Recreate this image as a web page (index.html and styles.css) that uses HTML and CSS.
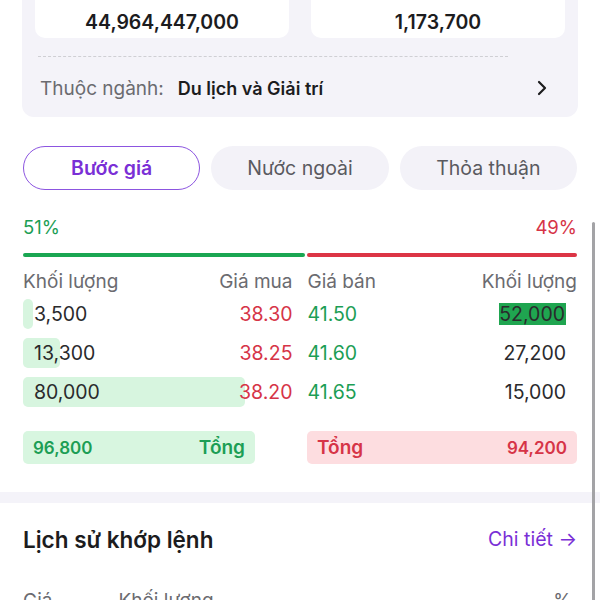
FILE: index.html
```html
<!DOCTYPE html>
<html lang="vi">
<head>
    <meta charset="UTF-8">
    <meta name="viewport" content="width=device-width, initial-scale=1.0">
    <title>Bước giá</title>
    <link rel="stylesheet" href="styles.css">
</head>
<body>
    <div class="page">
        <div class="info">
            <div class="cards">
                <div class="card">44,964,447,000</div>
                <div class="card">1,173,700</div>
            </div>
            <div class="dash"></div>
            <div class="sector">
                <span class="sector_label">Thuộc ngành:</span>
                <span class="sector_name">Du lịch và Giải trí</span>
                <svg class="chev" width="14" height="16" viewBox="0 0 14 16"><path d="M4 2 L10 8 L4 14" fill="none" stroke="#1c1c1e" stroke-width="2.2" stroke-linecap="round" stroke-linejoin="round"/></svg>
            </div>
        </div>

        <div class="tabs">
            <div class="tab active">Bước giá</div>
            <div class="tab">Nước ngoài</div>
            <div class="tab">Thỏa thuận</div>
        </div>

        <div class="book">
            <div class="pct">
                <span class="green">51%</span>
                <span class="red">49%</span>
            </div>
            <div class="ratio">
                <div class="ratio_buy" style="flex:51"></div>
                <div class="ratio_sell" style="flex:49"></div>
            </div>

            <div class="sides">
                <div class="side">
                    <div class="head"><span>Khối lượng</span><span>Giá mua</span></div>
                    <div class="row">
                        <div class="fill" style="width:10px"></div>
                        <span class="vol">3,500</span><span class="red">38.30</span>
                    </div>
                    <div class="row">
                        <div class="fill" style="width:37px"></div>
                        <span class="vol">13,300</span><span class="red">38.25</span>
                    </div>
                    <div class="row">
                        <div class="fill" style="width:222px"></div>
                        <span class="vol">80,000</span><span class="red">38.20</span>
                    </div>
                </div>
                <div class="side">
                    <div class="head"><span>Giá bán</span><span>Khối lượng</span></div>
                    <div class="row ask">
                        <span class="green">41.50</span><span class="vol mark">52,000</span>
                    </div>
                    <div class="row ask">
                        <span class="green">41.60</span><span class="vol">27,200</span>
                    </div>
                    <div class="row ask">
                        <span class="green">41.65</span><span class="vol">15,000</span>
                    </div>
                </div>
            </div>

            <div class="totals">
                <div class="total total_buy"><span>96,800</span><span>Tổng</span></div>
                <div class="total total_sell"><span>Tổng</span><span>94,200</span></div>
            </div>
        </div>

        <div class="band"></div>

        <div class="history">
            <div class="history_top">
                <h2>Lịch sử khớp lệnh</h2>
                <a href="javascript:''" class="more">Chi tiết →</a>
            </div>
            <div class="history_head">
                <span class="col_price">Giá</span>
                <span class="col_vol">Khối lượng</span>
                <span class="col_pct">%</span>
            </div>
        </div>

        <div class="scroll"></div>
    </div>
</body>
</html>
```

FILE: styles.css
```css
*{
    padding: 0;
    margin: 0;
    box-sizing: border-box;
}
a{
    text-decoration: none;
}
body{
    font-family: Inter, "Noto Sans", sans-serif;
    color: #1c1c1e;
    background-color: #fff;
}
.page{
    width: 600px;
    height: 600px;
    overflow: hidden;
    position: relative;
}
.green{
    color: #1c9e55;
}
.red{
    color: #d63447;
}

/* thong tin */
.info{
    margin: 0 22px;
    padding: 0 13px 17px;
    background-color: #f4f3f9;
    border-radius: 0 0 12px 12px;
}
.info .cards{
    display: grid;
    grid-template-columns: 1fr 1fr;
    gap: 22px;
}
.info .card{
    height: 38px;
    padding-bottom: 3px;
    background-color: #fff;
    border-radius: 0 0 10px 10px;
    display: flex;
    align-items: flex-end;
    justify-content: center;
    font-size: 19.5px;
    line-height: 26px;
    font-weight: 600;
}
.info .dash{
    margin: 18px 57px 0 3px;
    border-top: 1.5px dashed #cfcfd4;
}
.info .sector{
    margin-top: 19px;
    padding: 0 16px 0 5px;
    display: flex;
    align-items: center;
    height: 24px;
    font-size: 19px;
}
.sector_label{
    color: #6b6b70;
}
.sector_name{
    margin-left: 14px;
    font-weight: 600;
    font-size: 18px;
}
.sector .chev{
    margin-left: auto;
}

/* tab */
.tabs{
    margin-top: 29px;
    padding: 0 23px;
    display: grid;
    grid-template-columns: 1fr 1fr 1fr;
    gap: 11px;
}
.tab{
    height: 44px;
    border-radius: 22px;
    background-color: #f3f2f8;
    color: #5a5a60;
    font-size: 19.5px;
    display: flex;
    align-items: center;
    justify-content: center;
}
.tab.active{
    background-color: #fff;
    border: 1.5px solid #8c55e0;
    color: #7a2fd6;
    font-weight: 600;
}

/* so lenh */
.book{
    padding: 0 23px;
}
.book .pct{
    margin-top: 26px;
    display: flex;
    justify-content: space-between;
    font-size: 18.5px;
    line-height: 22px;
}
.book .ratio{
    margin-top: 15px;
    display: flex;
    gap: 2px;
    height: 4px;
}
.ratio_buy{
    background-color: #1aa652;
    border-radius: 2px;
}
.ratio_sell{
    background-color: #dc3545;
    border-radius: 2px;
}
.book .sides{
    margin-top: 14px;
    display: grid;
    grid-template-columns: 1fr 1fr;
    gap: 15px;
}
.side .head{
    display: flex;
    justify-content: space-between;
    color: #6b6b70;
    font-size: 19px;
    line-height: 22px;
    margin-bottom: 6px;
}
.side .row{
    position: relative;
    height: 30px;
    margin-bottom: 9px;
    display: flex;
    align-items: center;
    justify-content: space-between;
    font-size: 19.5px;
}
.side .row .fill{
    position: absolute;
    left: 0;
    top: 0;
    height: 30px;
    background-color: #d7f5df;
    border-radius: 5px;
}
.side .row span{
    position: relative;
}
.side .row .vol{
    padding-left: 11px;
    color: #2a2a2c;
}
.side .row.ask .vol{
    padding-left: 0;
    margin-right: 11px;
}
.side .row .mark{
    background-color: #1fa550;
    padding: 0 1px;
    margin-right: 10px;
    line-height: 22px;
}
.totals{
    margin-top: 15px;
    display: flex;
    justify-content: space-between;
}
.total{
    height: 33px;
    border-radius: 5px;
    padding: 0 10px;
    display: flex;
    align-items: center;
    justify-content: space-between;
    font-size: 17px;
    font-weight: 600;
}
.total span:nth-child(2), .total_sell span:first-child{
    font-size: 19px;
}
.total_sell span:nth-child(2){
    font-size: 17px;
}
.total_buy{
    width: 232px;
    background-color: #d8f6e0;
    color: #1c9e55;
}
.total_sell{
    width: 270px;
    background-color: #fddde0;
    color: #d63447;
}

.band{
    margin-top: 28px;
    height: 11px;
    background-color: #f4f3f9;
}

/* lich su */
.history{
    padding: 0 23px;
}
.history_top{
    margin-top: 22px;
    display: flex;
    justify-content: space-between;
    align-items: center;
    height: 28px;
}
.history_top h2{
    font-size: 22.5px;
    font-weight: 600;
}
.history_top .more{
    color: #7a2fd6;
    font-size: 19.5px;
}
.history_head{
    margin-top: 37px;
    display: flex;
    color: #6b6b70;
    font-size: 19px;
    line-height: 22px;
}
.col_vol{
    margin-left: 66px;
}
.col_pct{
    margin-left: auto;
    margin-right: 5px;
}

.scroll{
    position: absolute;
    right: 5px;
    top: 222px;
    width: 3px;
    height: 400px;
    background-color: #a3a3a6;
    border-radius: 2px;
}
```
